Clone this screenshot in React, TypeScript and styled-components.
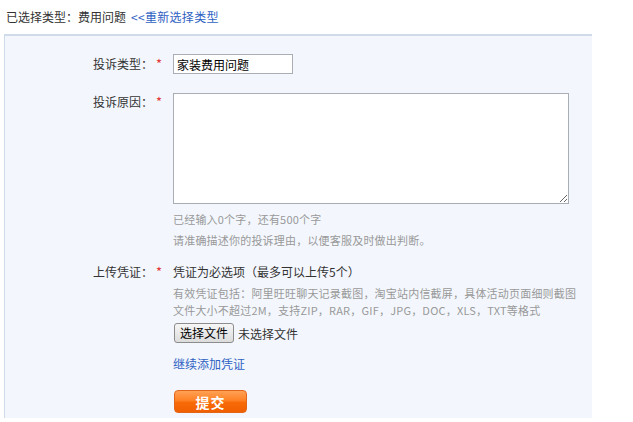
import styled, { createGlobalStyle } from 'styled-components';

const GlobalStyle = createGlobalStyle`
body {
    margin: 0;
    background: #fff;
    font-family: "Noto Sans CJK SC", "Liberation Sans", sans-serif;
    font-size: 12px;
    color: #333;
}
`;

const Wrapper = styled.div`
width: 633px;
height: 422px;
overflow: hidden;
`;

const Selected = styled.div`
height: 34px;
padding-left: 6px;
display: flex;
align-items: center;
padding-bottom: 2px;
box-sizing: border-box;
`;

const Link = styled.a`
color: #2f62c3;
text-decoration: none;
margin-left: 5px;
letter-spacing: 0.3px;
cursor: pointer;
`;

const Panel = styled.div`
margin-left: 4px;
width: 588px;
background: #f3f7fd;
border-top: 2px solid #d0dbe9;
border-left: 1px solid #d0dbe9;
padding: 18px 0 5px;
box-sizing: border-box;
`;

const Row = styled.div<{ gap?: number }>`
display: grid;
grid-template-columns: 168px 1fr;
margin-bottom: ${(props) => props.gap ?? 0}px;
`;

const Label = styled.div<{ top?: number }>`
text-align: right;
padding-right: 11px;
padding-top: ${(props) => props.top ?? 0}px;
line-height: 18px;
`;

const Star = styled.span`
color: #e4393c;
margin-left: 3px;
font-size: 13px;
`;

const TextInput = styled.input`
width: 120px;
height: 20px;
box-sizing: border-box;
border: 1px solid #a9aeb4;
padding: 0 3px;
font-family: inherit;
font-size: 12px;
color: #000;
background: #fff;
outline: none;
`;

const TextArea = styled.textarea`
display: block;
width: 396px;
height: 111px;
box-sizing: border-box;
border: 1px solid #a9aeb4;
background: #fff;
resize: both;
outline: none;
font-family: inherit;
`;

const Hint = styled.div<{ lh?: number }>`
color: #999;
font-size: 11px;
letter-spacing: 0.2px;
white-space: nowrap;
line-height: ${(props) => props.lh ?? 21}px;
`;

const Note = styled.div`
color: #333;
line-height: 18px;
margin-bottom: 4px;
`;

const FileLine = styled.div`
display: flex;
align-items: center;
gap: 4px;
margin-top: 4px;
margin-left: 1px;
`;

const FileButton = styled.button`
height: 20px;
padding: 0 5px;
font-family: inherit;
font-size: 12px;
color: #000;
border: 1px solid #8c8c8c;
border-radius: 3px;
background: linear-gradient(#f6f6f6, #dcdcdc);
line-height: 18px;
`;

const AddLink = styled.a`
display: block;
color: #2f62c3;
margin-top: 12px;
line-height: 17px;
cursor: pointer;
`;

const Submit = styled.button`
margin-top: 18px;
margin-left: 1px;
width: 73px;
height: 23px;
border: 1px solid #e2661a;
border-radius: 4px;
background: linear-gradient(#ffa155, #ff8124 45%, #f86a08 55%, #f05f00);
color: #fff;
font-family: inherit;
font-size: 14px;
font-weight: bold;
letter-spacing: 1px;
line-height: 20px;
padding: 0;
display: block;
`;

function App() {
    return (
        <Wrapper>
            <GlobalStyle />
            <Selected>
                已选择类型：费用问题<Link>&lt;&lt;重新选择类型</Link>
            </Selected>
            <Panel>
                <Row gap={19}>
                    <Label top={1}>投诉类型：<Star>*</Star></Label>
                    <div>
                        <TextInput defaultValue="家装费用问题" />
                    </div>
                </Row>
                <Row gap={12}>
                    <Label>投诉原因：<Star>*</Star></Label>
                    <div>
                        <TextArea />
                        <Hint style={{ marginTop: 5 }}>已经输入0个字，还有500个字</Hint>
                        <Hint>请准确描述你的投诉理由，以便客服及时做出判断。</Hint>
                    </div>
                </Row>
                <Row>
                    <Label>上传凭证：<Star>*</Star></Label>
                    <div>
                        <Note>凭证为必选项（最多可以上传5个）</Note>
                        <Hint lh={17}>有效凭证包括：阿里旺旺聊天记录截图，淘宝站内信截屏，具体活动页面细则截图</Hint>
                        <Hint lh={17}>文件大小不超过2M，支持ZIP，RAR，GIF，JPG，DOC，XLS，TXT等格式</Hint>
                        <FileLine>
                            <FileButton>选择文件</FileButton>
                            <span>未选择文件</span>
                        </FileLine>
                        <AddLink>继续添加凭证</AddLink>
                        <Submit>提交</Submit>
                    </div>
                </Row>
            </Panel>
        </Wrapper>
    );
}

export default App;
